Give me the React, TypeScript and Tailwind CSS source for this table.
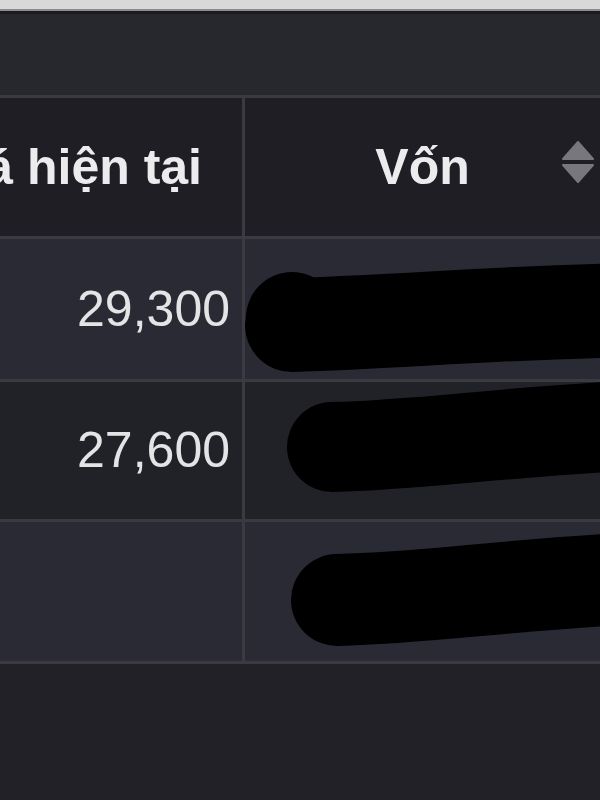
import React from "react";

const font = { fontFamily: '"Liberation Sans", Arial, sans-serif' };

function SortIcon() {
  return (
    <svg width="32" height="42" viewBox="0 0 32 42" className="absolute right-[6px] top-[43px]">
      <path d="M16 1 L31 18 L1 18 Z" fill="#77777d" stroke="#77777d" strokeWidth="2" strokeLinejoin="round" />
      <path d="M1 24 L31 24 L16 41 Z" fill="#77777d" stroke="#77777d" strokeWidth="2" strokeLinejoin="round" />
    </svg>
  );
}

function Row({ bg, value }: { bg: string; value: string }) {
  return (
    <div className={`flex ${bg}`}>
      <div className="w-[242px] shrink-0 flex items-center justify-end pr-[12px] text-[50px] text-[#e4e4e6] overflow-hidden whitespace-nowrap">
        {value}
      </div>
      <div className="w-[3px] shrink-0 bg-[#3a3a40]" />
      <div className="flex-1" />
    </div>
  );
}

export default function App() {
  return (
    <div className="relative w-[600px] h-[800px] overflow-hidden bg-[#212127]" style={font}>
      <div className="h-[9px] bg-[#d8d8d8]" />
      <div className="h-[2px] bg-[#8c8c8e]" />
      <div className="h-[3px] bg-[#1c1c20]" />
      <div className="h-[81px] bg-[#27282e]" />
      <div className="h-[3px] bg-[#3a3a40]" />
      {/* header */}
      <div className="flex h-[138px] bg-[#1e1e24]">
        <div className="w-[242px] shrink-0 flex items-center justify-end pr-[40px] overflow-hidden whitespace-nowrap text-[50px] font-bold text-[#ececee]">
          Giá hiện tại
        </div>
        <div className="w-[3px] shrink-0 bg-[#3a3a40]" />
        <div className="relative flex-1 flex items-center justify-center text-[50px] font-bold text-[#ececee]">
          Vốn
          <SortIcon />
        </div>
      </div>
      <div className="h-[3px] bg-[#3a3a40]" />
      <div className="h-[140px] flex flex-col">
        <div className="flex-1 flex flex-col">
          <Row bg="bg-[#2a2a35] h-[140px]" value="29,300" />
        </div>
      </div>
      <div className="h-[3px] bg-[#3a3a40]" />
      <Row bg="bg-[#212128] h-[137px]" value="27,600" />
      <div className="h-[3px] bg-[#3a3a40]" />
      <Row bg="bg-[#2a2a35] h-[139px]" value="" />
      <div className="h-[3px] bg-[#3a3a40]" />
      <div className="h-[136px] bg-[#212127]" />

      {/* redaction marks */}
      <svg className="absolute left-0 top-0 pointer-events-none" width="600" height="800" viewBox="0 0 600 800">
        <g stroke="#000" fill="none" strokeLinecap="round">
          <path d="M292 325 C 400 322, 500 312, 640 310" strokeWidth="94" />
          <path d="M332 447 C 420 445, 500 432, 640 425" strokeWidth="90" />
          <path d="M337 600 C 430 598, 500 585, 640 578" strokeWidth="92" />
        </g>
        <circle cx="292" cy="318" r="46" fill="#000" />
      </svg>
    </div>
  );
}
